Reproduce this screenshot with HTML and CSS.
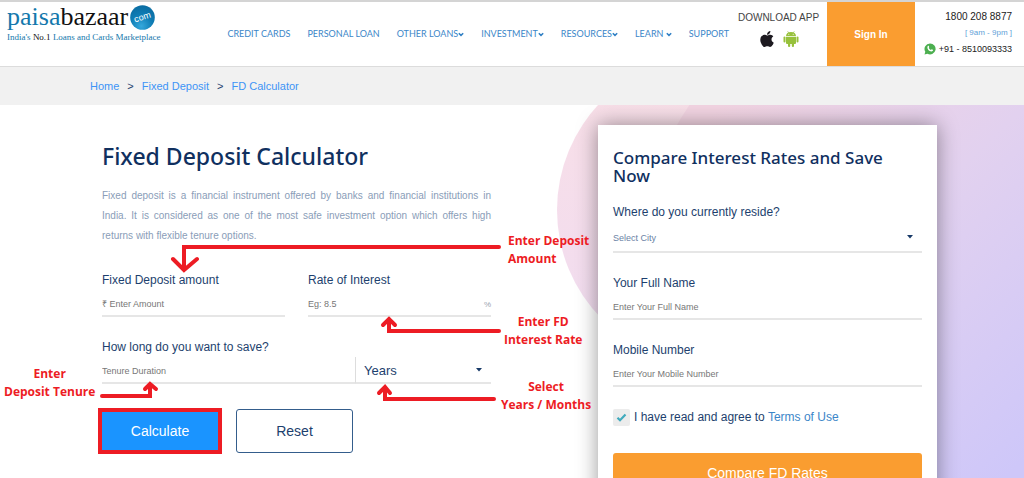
FILE: index.html
```html
<!DOCTYPE html>
<html lang="en">
<head>
    <meta charset="utf-8">
    <meta name="viewport" content="width=device-width, initial-scale=1">
    <title>Fixed Deposit Calculator</title>
    <link rel="stylesheet" href="styles.css">
</head>
<body>
<header class="header">
    <a class="logo" href="#">
        <span class="logo_name"><span class="logo_paisa">paisa</span>bazaar
            <svg class="logo_com" viewBox="0 0 25 25" aria-hidden="true">
                <defs>
                    <radialGradient id="ball" cx="0.45" cy="0.85" r="0.9">
                        <stop offset="0" stop-color="#35a8dc"/>
                        <stop offset="0.5" stop-color="#0f7db5"/>
                        <stop offset="1" stop-color="#0a6a9f"/>
                    </radialGradient>
                </defs>
                <circle cx="12.5" cy="12.5" r="12.3" fill="url(#ball)"/>
                <text class="logo_com_text" x="12.5" y="15" transform="rotate(-17 12.5 12.5)">com</text>
            </svg>
        </span>
        <span class="logo_tag">India's <b>No.1</b> Loans and Cards Marketplace</span>
    </a>
    <nav class="nav">
        <a href="#">CREDIT CARDS</a>
        <a href="#">PERSONAL LOAN</a>
        <a href="#">OTHER LOANS<svg class="caret" viewBox="0 0 6 5"><path d="M0.8 1.2L3 3.4L5.2 1.2"/></svg></a>
        <a href="#">INVESTMENT<svg class="caret" viewBox="0 0 6 5"><path d="M0.8 1.2L3 3.4L5.2 1.2"/></svg></a>
        <a href="#">RESOURCES<svg class="caret" viewBox="0 0 6 5"><path d="M0.8 1.2L3 3.4L5.2 1.2"/></svg></a>
        <a href="#">LEARN <svg class="caret" viewBox="0 0 6 5"><path d="M0.8 1.2L3 3.4L5.2 1.2"/></svg></a>
        <a href="#">SUPPORT</a>
    </nav>
    <div class="apps">
        <span>DOWNLOAD APP</span>
        <div class="apps_icons">
            <a href="#" aria-label="iOS app">
                <svg class="app_icon" viewBox="-20 32 424 448"><path fill="#1d1a20" d="M318.7 268.7c-.2-36.7 16.4-64.4 50-84.8-18.8-26.9-47.2-41.7-84.7-44.6-35.5-2.8-74.3 20.7-88.5 20.7-15 0-49.4-19.7-76.4-19.7C63.3 141.2 4 184.8 4 273.5q0 39.3 14.4 81.2c12.8 36.7 59 126.7 107.2 125.2 25.2-.6 43-17.9 75.8-17.9 31.8 0 48.3 17.9 76.4 17.9 48.6-.7 90.4-82.5 102.6-119.3-65.2-30.7-61.7-90-61.7-91.9zm-56.6-164.2c27.3-32.4 24.8-61.9 24-72.5-24.1 1.4-52 16.4-67.9 34.9-17.5 19.8-27.8 44.3-25.6 71.9 26.1 2 49.9-11.4 69.5-34.3z"/></svg>
            </a>
            <a href="#" aria-label="Android app">
                <svg class="app_icon" viewBox="0 0 16 16">
                    <g fill="#97c13c">
                        <path d="M3 5.1C3 2.6 5 1 8 1s5 1.600 5 4.100z"/>
                        <path d="M3 5.700h10v6.300a1 1 0 0 1-1 1H4a1 1 0 0 1-1-1z"/>
                        <rect x="0.500" y="5.600" width="2" height="6" rx="1"/>
                        <rect x="13.500" y="5.600" width="2" height="6" rx="1"/>
                        <rect x="5" y="11" width="2.200" height="5" rx="1"/>
                        <rect x="8.800" y="11" width="2.200" height="5" rx="1"/>
                    </g>
                    <path d="M4.600 0.200L5.800 2M11.400 0.200L10.200 2" stroke="#97c13c" stroke-width="0.600"/>
                    <circle cx="5.800" cy="3.300" r="0.500" fill="#fff"/>
                    <circle cx="10.200" cy="3.300" r="0.500" fill="#fff"/>
                </svg>
            </a>
        </div>
    </div>
    <a class="sign_in" href="#">Sign In</a>
    <div class="contact">
        <span>1800 208 8877</span>
        <span class="contact_hours">[ 9am - 9pm ]</span>
        <span class="contact_phone">
            <svg class="whatsapp" viewBox="0 0 12 12">
                <path fill="#4caf50" d="M6 0.500a5.500 5.500 0 1 1-2.600 10.300L0.500 11.600l0.800-2.800A5.500 5.500 0 0 1 6 0.500z"/>
                <path fill="#fff" d="M3.800 3c0.500-0.500 0.800-0.300 1 0.100l0.400 1c0.100 0.300-0.500 0.700-0.400 0.900 0.500 0.900 1.100 1.500 2.100 1.900 0.200 0.100 0.600-0.700 0.900-0.600l1 0.500c0.400 0.200 0.200 0.900-0.200 1.300C6.500 9.700 2 6 3.800 3z"/>
            </svg>
            +91 - 8510093333
        </span>
    </div>
</header>

<nav class="breadcrumb">
    <a href="#">Home</a><span>&gt;</span>
    <a href="#">Fixed Deposit</a><span>&gt;</span>
    <a href="#">FD Calculator</a>
</nav>

<main class="hero">
    <svg class="hero_bg" viewBox="0 0 484 373" aria-hidden="true">
        <defs>
            <linearGradient id="pink" x1="0" y1="0" x2="0" y2="1">
                <stop offset="0" stop-color="#f9dfe6"/>
                <stop offset="1" stop-color="#f0dcf1"/>
            </linearGradient>
            <linearGradient id="lilac" gradientUnits="userSpaceOnUse" x1="180" y1="0" x2="500" y2="340">
                <stop offset="0" stop-color="#f2d4e2"/>
                <stop offset="0.450" stop-color="#e2d1ef"/>
                <stop offset="1" stop-color="#cec7f9"/>
            </linearGradient>
        </defs>
        <circle cx="172" cy="105" r="155" fill="url(#pink)"/>
        <circle cx="440" cy="195" r="350" fill="url(#lilac)"/>
    </svg>

    <form class="calc">
        <h1 class="calc_title">Fixed Deposit Calculator</h1>
        <p class="calc_text">Fixed deposit is a financial instrument offered by banks and financial institutions in India. It is considered as one of the most safe investment option which offers high returns with flexible tenure options.</p>
        <div class="calc_row">
            <div class="field">
                <label for="amount">Fixed Deposit amount</label>
                <input class="txt" id="amount" type="text" placeholder="₹ Enter Amount">
            </div>
            <div class="field">
                <label for="rate">Rate of Interest</label>
                <div class="txt_group">
                    <input class="txt" id="rate" type="text" placeholder="Eg: 8.5">
                    <span class="unit">%</span>
                </div>
            </div>
        </div>
        <div class="field">
            <label for="tenure">How long do you want to save?</label>
            <div class="txt_group">
                <input class="txt" id="tenure" type="text" placeholder="Tenure Duration">
                <select class="txt period" aria-label="Period">
                    <option>Years</option>
                    <option>Months</option>
                </select>
            </div>
        </div>
        <div class="buttons">
            <button class="btn btn_calc" type="button">Calculate</button>
            <button class="btn btn_reset" type="reset">Reset</button>
        </div>
    </form>

    <form class="card">
        <h2 class="card_title">Compare Interest Rates and Save Now</h2>
        <div class="field">
            <label for="city">Where do you currently reside?</label>
            <select class="txt city" id="city">
                <option>Select City</option>
            </select>
        </div>
        <div class="field">
            <label for="name">Your Full Name</label>
            <input class="txt" id="name" type="text" placeholder="Enter Your Full Name">
        </div>
        <div class="field">
            <label for="mobile">Mobile Number</label>
            <input class="txt" id="mobile" type="tel" placeholder="Enter Your Mobile Number">
        </div>
        <div class="agree">
            <input class="check" id="agree" type="checkbox" checked>
            <label for="agree">I have read and agree to <a href="#">Terms of Use</a></label>
        </div>
        <button class="btn btn_compare" type="button">Compare FD Rates</button>
    </form>

    <!-- callouts -->
    <svg class="arrows" viewBox="0 0 510 373" aria-hidden="true">
        <path d="M499 142H184V165M173 154L184 165L197 154"/>
        <path d="M499 226H389V214M383 220L389 214L395 220"/>
        <path d="M494 294H385V282M379 288L385 282L390 288"/>
        <path d="M102 291H150V279M145 284L150 279L156 284"/>
    </svg>
    <div class="note note_amount">Enter Deposit<br>Amount</div>
    <div class="note note_rate">Enter FD<br>Interest Rate</div>
    <div class="note note_period">Select<br>Years / Months</div>
    <div class="note note_tenure">Enter<br>Deposit Tenure</div>
</main>
</body>
</html>
```
FILE: styles.css
```css
*{margin:0;padding:0;box-sizing:border-box;}
body{
    font-family: "Liberation Sans", Arial, sans-serif;
    font-size: 12px;
    color: #1d3f6e;
    background: #fff;
}
a{color: #3b86c8;text-decoration: none;}

/* header */
.header{
    display: flex;
    align-items: stretch;
    height: 67px;
    border-top: 2px solid #d4d4d4;
    border-bottom: 1px solid #dcdcdc;
}
.logo{
    display: flex;
    flex-direction: column;
    width: 150px;
    margin-left: 7px;
    padding-top: 3px;
    font-family: "Liberation Serif", "Times New Roman", serif;
    white-space: nowrap;
}
.logo_name{
    display: flex;
    height: 25px;
    line-height: 24px;
    font-size: 26px;
    color: #111;
}
.logo_paisa{color: #1478ac;}
.logo_com{
    width: 25px;
    height: 25px;
    margin-left: 2px;
}
.logo_com_text{
    font-family: "Liberation Sans", Arial, sans-serif;
    font-size: 9px;
    fill: #fff;
    text-anchor: middle;
}
.logo_tag{
    line-height: 14px;
    font-size: 9px;
    color: #1478ac;
}
.logo_tag b{font-weight: normal;color: #111;}
.nav{
    flex: 1;
    display: flex;
    align-items: center;
    justify-content: flex-end;
    gap: 17px;
    margin-right: 9px;
    padding-bottom: 1px;
    font-family: Lato, sans-serif;
    font-size: 9px;
    white-space: nowrap;
}
.caret{
    width: 6px;
    height: 5px;
    fill: none;
    stroke: #2f7fc4;
    stroke-width: 1.5;
}
.apps{
    display: flex;
    flex-direction: column;
    align-items: center;
    gap: 6px;
    width: 81px;
    margin-right: 8px;
    padding-top: 8px;
    font-size: 10px;
    line-height: 15px;
    color: #444;
    white-space: nowrap;
}
.apps_icons{display: flex;gap: 8px;}
.app_icon{display: block;width: 16px;height: 16px;}
.sign_in{
    display: flex;
    align-items: center;
    justify-content: center;
    width: 88px;
    font-size: 10px;
    font-weight: bold;
    color: #fff;
    background: #fa9d30;
}
.contact{
    display: flex;
    flex-direction: column;
    align-items: flex-end;
    width: 109px;
    padding: 7px 12px 0 0;
    font-size: 10px;
    line-height: 16px;
    color: #222;
    white-space: nowrap;
}
.contact_hours{font-size: 8px;color: #5f9fd8;}
.contact_phone{display: flex;align-items: center;gap: 3px;font-size: 9px;}
.whatsapp{width: 12px;height: 12px;}

/* breadcrumb */
.breadcrumb{
    display: flex;
    align-items: center;
    gap: 8px;
    height: 38px;
    padding: 0 90px;
    font-size: 11px;
    background: #f1f1f1;
}
.breadcrumb a{color: #3d94f6;}

/* main area */
.hero{
    position: relative;
    display: grid;
    grid-template-columns: minmax(0, 389fr) minmax(0, 339fr);
    gap: 107px;
    align-items: start;
    padding: 20px 87px 0 102px;
    overflow: hidden;
}
.hero_bg{
    position: absolute;
    top: 0;
    right: 0;
    width: 484px;
    height: 373px;
    overflow: visible;
}
.calc{position: relative;padding-top: 18px;}
.calc_title{
    font-family: "Noto Sans", sans-serif;
    font-size: 23px;
    font-weight: 500;
    line-height: 26px;
    color: #10305f;
}
.calc_text{
    margin: 17px 0 24px;
    font-size: 10px;
    line-height: 20px;
    text-align: justify;
    color: #8a9db8;
}
.calc_row{
    display: grid;
    grid-template-columns: 1fr 1fr;
    gap: 23px;
}
.field{display: flex;flex-direction: column;margin-bottom: 20px;}
.field label{line-height: 20px;white-space: nowrap;}
.txt{
    width: 100%;
    height: 27px;
    padding-top: 2px;
    border: 0;
    border-bottom: 2px solid #e6e6e6;
    border-radius: 0;
    outline: none;
    font-family: inherit;
    font-size: 9px;
    color: #1d3f6e;
    background: transparent;
}
.txt::placeholder{color: #777;opacity: 1;}
.txt_group{display: flex;}
.unit{
    display: flex;
    align-items: center;
    padding-top: 4px;
    border-bottom: 2px solid #e6e6e6;
    font-size: 8px;
    color: #9aa3b0;
}
select.txt{
    appearance: none;
    background: url("data:image/svg+xml,%3Csvg xmlns='http://www.w3.org/2000/svg' width='6' height='4'%3E%3Cpath d='M0 0h6L3 3.500z' fill='%23183a68'/%3E%3C/svg%3E") no-repeat right 9px center;
}
.txt.period{
    flex: 0 0 136px;
    padding-left: 8px;
    border-left: 1px solid #ddd;
    font-size: 13px;
}
.txt.city{height: 31px;color: #6a82a5;}
.buttons{
    display: flex;
    align-items: center;
    gap: 14px;
    margin: 24px 0 0 -4px;
}
.btn{
    font-family: inherit;
    font-size: 14px;
    cursor: pointer;
}
.btn_calc{
    width: 124px;
    height: 46px;
    border: 4px solid #ed1c24;
    color: #fff;
    background: #1a94ff;
}
.btn_reset{
    width: 117px;
    height: 44px;
    border: 1px solid #345d8c;
    border-radius: 3px;
    color: #1d3f6e;
    background: #fff;
}

/* compare card */
.card{
    position: relative;
    padding: 24px 15px;
    background: #fff;
    box-shadow: 0 0 20px rgba(0, 0, 0, 0.4);
}
.card_title{
    margin-bottom: 17px;
    font-family: "Noto Sans", sans-serif;
    font-size: 17px;
    font-weight: 500;
    line-height: 18px;
    color: #10305f;
}
.agree{display: flex;align-items: center;gap: 4px;line-height: 20px;white-space: nowrap;}
.check{
    appearance: none;
    width: 17px;
    height: 17px;
    border-radius: 2px;
    background: #ececec url("data:image/svg+xml,%3Csvg xmlns='http://www.w3.org/2000/svg' width='11' height='9'%3E%3Cpath d='M1.500 4.800L4 7.200L9.500 1.500' fill='none' stroke='%2341aabd' stroke-width='2.200'/%3E%3C/svg%3E") no-repeat center;
}
.btn_compare{
    display: block;
    width: 100%;
    height: 40px;
    margin-top: 26px;
    border: 0;
    border-radius: 3px;
    color: #fff;
    background: #fa9d30;
}

/* callouts over the form */
.arrows{
    position: absolute;
    top: 0;
    left: 0;
    width: 510px;
    height: 373px;
    fill: none;
    stroke: #ed1c24;
    stroke-width: 4;
    stroke-linecap: round;
    pointer-events: none;
}
.note{
    position: absolute;
    font-family: "Open Sans", sans-serif;
    font-size: 12px;
    font-weight: bold;
    line-height: 18px;
    text-align: center;
    color: #ed1c24;
    white-space: nowrap;
}
.note_amount{top: 127px;left: 508px;text-align: left;}
.note_rate{top: 208px;left: 504px;}
.note_period{top: 273px;left: 501px;}
.note_tenure{top: 260px;left: 4px;}
```
